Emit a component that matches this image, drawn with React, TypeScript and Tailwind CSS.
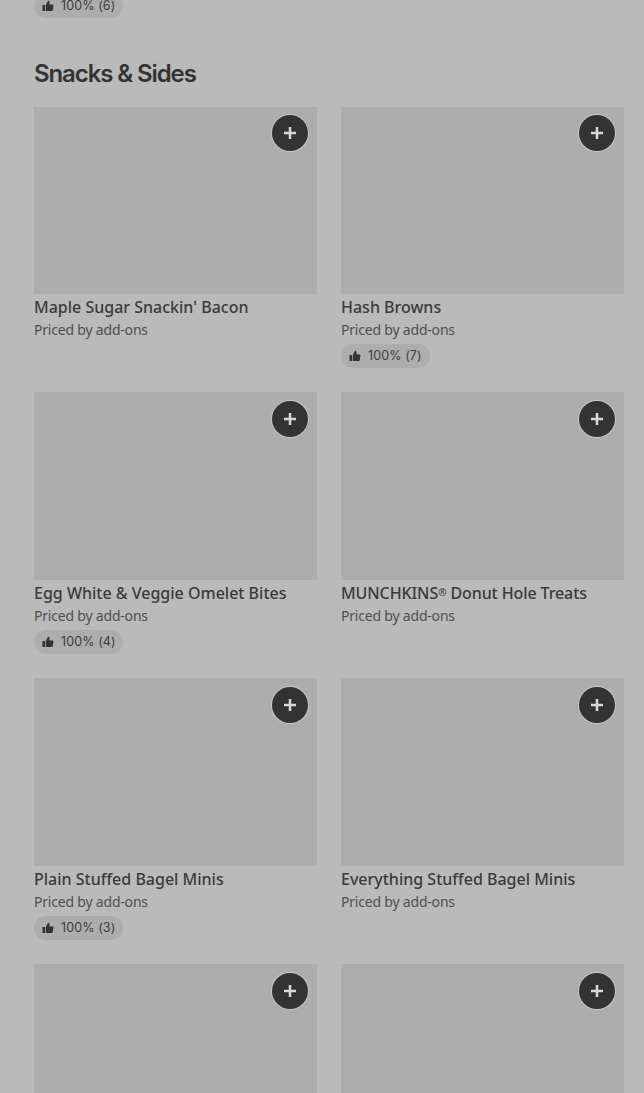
import type { ReactNode } from "react";

function Thumb() {
  return (
    <svg width="12" height="12" viewBox="0 0 12 12" className="shrink-0" fill="#333333">
      <rect x="0.5" y="5" width="2.5" height="6" />
      <path d="M3.8 5.2 6 .8c.9 0 1.5.6 1.5 1.5V4.4h3c.7 0 1.1.6 1 1.2l-.8 4.6c-.1.5-.5.8-1 .8H3.8z" />
    </svg>
  );
}

function Pill({ label }: { label: string }) {
  return (
    <div className="flex h-[24px] w-[89px] items-center gap-[7px] rounded-full bg-[#adadad] pl-[8px] font-['Inter','Liberation_Sans',sans-serif] text-[12.5px] leading-[16px] tracking-[0.1px] text-[#3d3d3d]">
      <Thumb />
      <span>{label}</span>
    </div>
  );
}

function Card({ name, rating }: { name?: ReactNode; rating?: string }) {
  return (
    <div className="flex h-[285.75px] flex-col">
      <div className="relative h-[187.5px] shrink-0 bg-[#adadad]">
        <button className="absolute right-[9px] top-[8.7px] flex h-[36px] w-[36px] items-center justify-center rounded-full bg-[#333333] shadow-[0_0_0_1px_#c6c6c6]">
          <svg width="12" height="12" viewBox="0 0 12 12" fill="#d8d8d8">
            <path d="M4.75 0h2.5v4.75H12v2.5H7.25V12h-2.5V7.25H0v-2.5h4.75z" />
          </svg>
        </button>
      </div>
      {name ? (
        <>
          <div className="mt-[3px] h-[20px] text-[16px] font-medium leading-[20px] text-[#3a3a3a]">{name}</div>
          <div className="mt-[3px] text-[14px] leading-[20px] tracking-[-0.2px] text-[#505050]">Priced by add-ons</div>
        </>
      ) : null}
      {rating ? <div className="mt-[4px]"><Pill label={rating} /></div> : null}
    </div>
  );
}

const items: { name?: ReactNode; rating?: string }[] = [
  { name: "Maple Sugar Snackin' Bacon" },
  { name: "Hash Browns", rating: "100% (7)" },
  { name: "Egg White & Veggie Omelet Bites", rating: "100% (4)" },
  {
    name: (
      <span className="tracking-[-0.1px]">
        MUNCHKINS<span className="align-[3px] text-[10px] leading-[0]">®</span> Donut Hole Treats
      </span>
    ),
  },
  { name: "Plain Stuffed Bagel Minis", rating: "100% (3)" },
  { name: "Everything Stuffed Bagel Minis" },
  {},
  {},
];

export default function App() {
  return (
    <div className="h-[1093px] w-[644px] overflow-hidden bg-[#bababa] pl-[34px] pr-[20px] font-['Noto_Sans','Liberation_Sans',sans-serif]">
      <div className="-mt-[6px]">
        <Pill label="100% (6)" />
      </div>
      <h2 className="mt-[40px] font-['Inter','Liberation_Sans',sans-serif] text-[24px] font-semibold leading-[32px] tracking-[-1.1px] text-[#333333]">Snacks &amp; Sides</h2>
      <div className="mt-[16.6px] grid grid-cols-2 gap-x-[24px]">
        {items.map((it, i) => (
          <Card key={i} name={it.name} rating={it.rating} />
        ))}
      </div>
    </div>
  );
}
